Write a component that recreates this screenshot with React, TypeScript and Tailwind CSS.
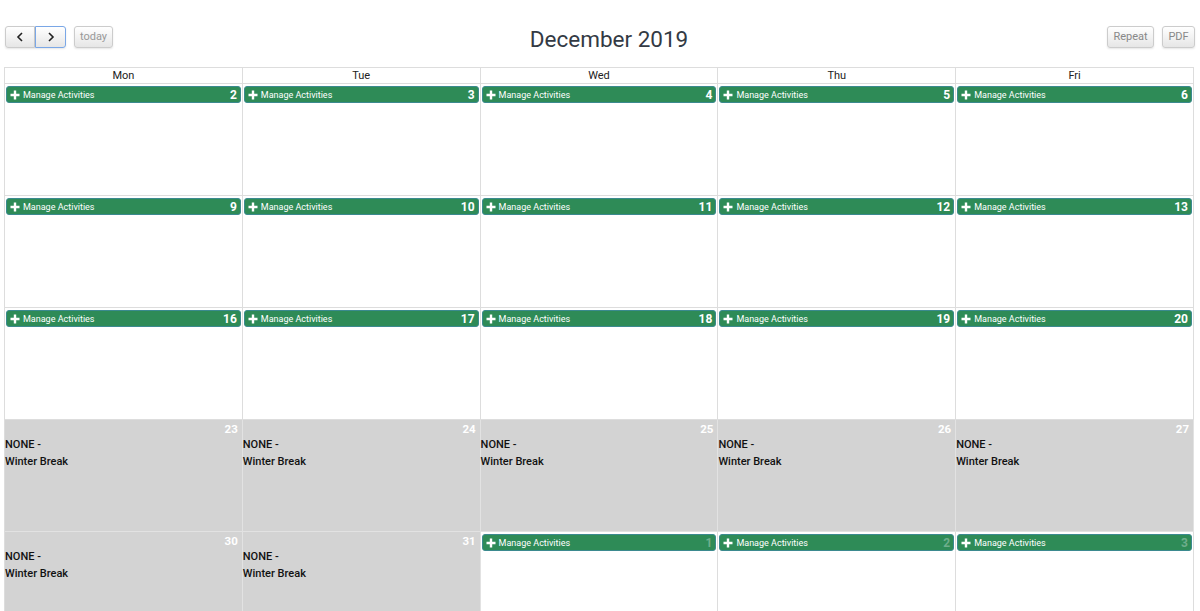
import React from 'react'

type Day = { n: number; kind: 'active' | 'off' | 'next' }

const DAYS = ['Mon', 'Tue', 'Wed', 'Thu', 'Fri']

const WEEKS: Day[][] = [
  [2, 3, 4, 5, 6].map(n => ({ n, kind: 'active' as const })),
  [9, 10, 11, 12, 13].map(n => ({ n, kind: 'active' as const })),
  [16, 17, 18, 19, 20].map(n => ({ n, kind: 'active' as const })),
  [23, 24, 25, 26, 27].map(n => ({ n, kind: 'off' as const })),
  [
    { n: 30, kind: 'off' },
    { n: 31, kind: 'off' },
    { n: 1, kind: 'next' },
    { n: 2, kind: 'next' },
    { n: 3, kind: 'next' }
  ]
]

const Btn = ({ children, focused, className = '' }: { children: React.ReactNode; focused?: boolean; className?: string }) => (
  <button
    className={`h-[22px] border bg-gradient-to-b from-[#ffffff] to-[#e6e6e6] text-[11px] text-[#888] shadow-[0_1px_2px_rgba(0,0,0,0.1)] ${
      focused ? 'border-[#7aa7e6]' : 'border-[#ccc]'
    } ${className}`}>
    {children}
  </button>
)

const Chevron = ({ dir }: { dir: 'left' | 'right' }) => (
  <svg width="8" height="10" viewBox="0 0 8 10" className="mx-auto">
    <path d={dir === 'left' ? 'M6 1 L2 5 L6 9' : 'M2 1 L6 5 L2 9'} fill="none" stroke="#222" strokeWidth="1.6" />
  </svg>
)

const ManageBar = ({ n, dim }: { n: number; dim?: boolean }) => (
  <div className="mx-[1px] mt-[2px] flex h-[17px] items-center rounded-[3px] border border-[#3b8a8f] bg-[#2e8b57] pl-[3px] pr-[3px] text-white">
    <svg width="10" height="10" viewBox="0 0 10 10" className="mr-[3px]">
      <path d="M5 0.5 V9.5 M0.5 5 H9.5" stroke="#fff" strokeWidth="2.4" />
    </svg>
    <span className="mt-[2px] text-[9px] leading-none">Manage Activities</span>
    <span className={`ml-auto text-[12px] font-bold leading-none ${dim ? 'text-[#6fae8c]' : 'text-white'}`}>{n}</span>
  </div>
)

const Cell = ({ day }: { day: Day }) => {
  if (day.kind === 'off') {
    return (
      <div className="h-[112px] border-b border-r border-[#e2e2e2] bg-[#d3d3d3]">
        <div className="pr-[4px] pt-[1px] text-right text-[11.5px] font-bold leading-[16px] text-white">{day.n}</div>
        <div className="-mt-[1px] text-[11px] font-medium leading-[17px] text-[#111]">
          <div>NONE -</div>
          <div>Winter Break</div>
        </div>
      </div>
    )
  }
  return (
    <div className="h-[112px] border-b border-r border-[#ddd] bg-white">
      <ManageBar n={day.n} dim={day.kind === 'next'} />
    </div>
  )
}

export default function App() {
  return (
    <div className="h-[611px] overflow-hidden bg-white px-[4px] pt-[26px] font-['Roboto',sans-serif]">
      <div className="flex h-[22px] items-center">
        <div className="flex flex-1 items-center">
          <Btn className="ml-[1px] w-[30px] rounded-l-[3px]">
            <Chevron dir="left" />
          </Btn>
          <Btn focused className="w-[31px] rounded-r-[3px]">
            <Chevron dir="right" />
          </Btn>
          <Btn className="ml-[8px] w-[39px] rounded-[3px] text-[#999]">today</Btn>
        </div>
        <div className="ml-[18px] mt-[5px] text-[22.5px] leading-none text-[#333a44]">December 2019</div>
        <div className="flex flex-1 items-center justify-end gap-[8px]">
          <Btn className="w-[47px] rounded-[3px]">Repeat</Btn>
          <Btn className="mr-[1px] w-[33px] rounded-[3px]">PDF</Btn>
        </div>
      </div>

      <div className="mt-[19px] w-[1190px] border-l border-t border-[#ddd]">
        <div className="grid grid-cols-5">
          {DAYS.map(d => (
            <div key={d} className="h-[16px] border-b border-r border-[#ddd] text-center text-[11px] leading-[15px] text-[#222]">
              {d}
            </div>
          ))}
        </div>
        {WEEKS.map((week, i) => (
          <div key={i} className="grid grid-cols-5">
            {week.map((day, j) => (
              <Cell key={j} day={day} />
            ))}
          </div>
        ))}
      </div>
    </div>
  )
}
